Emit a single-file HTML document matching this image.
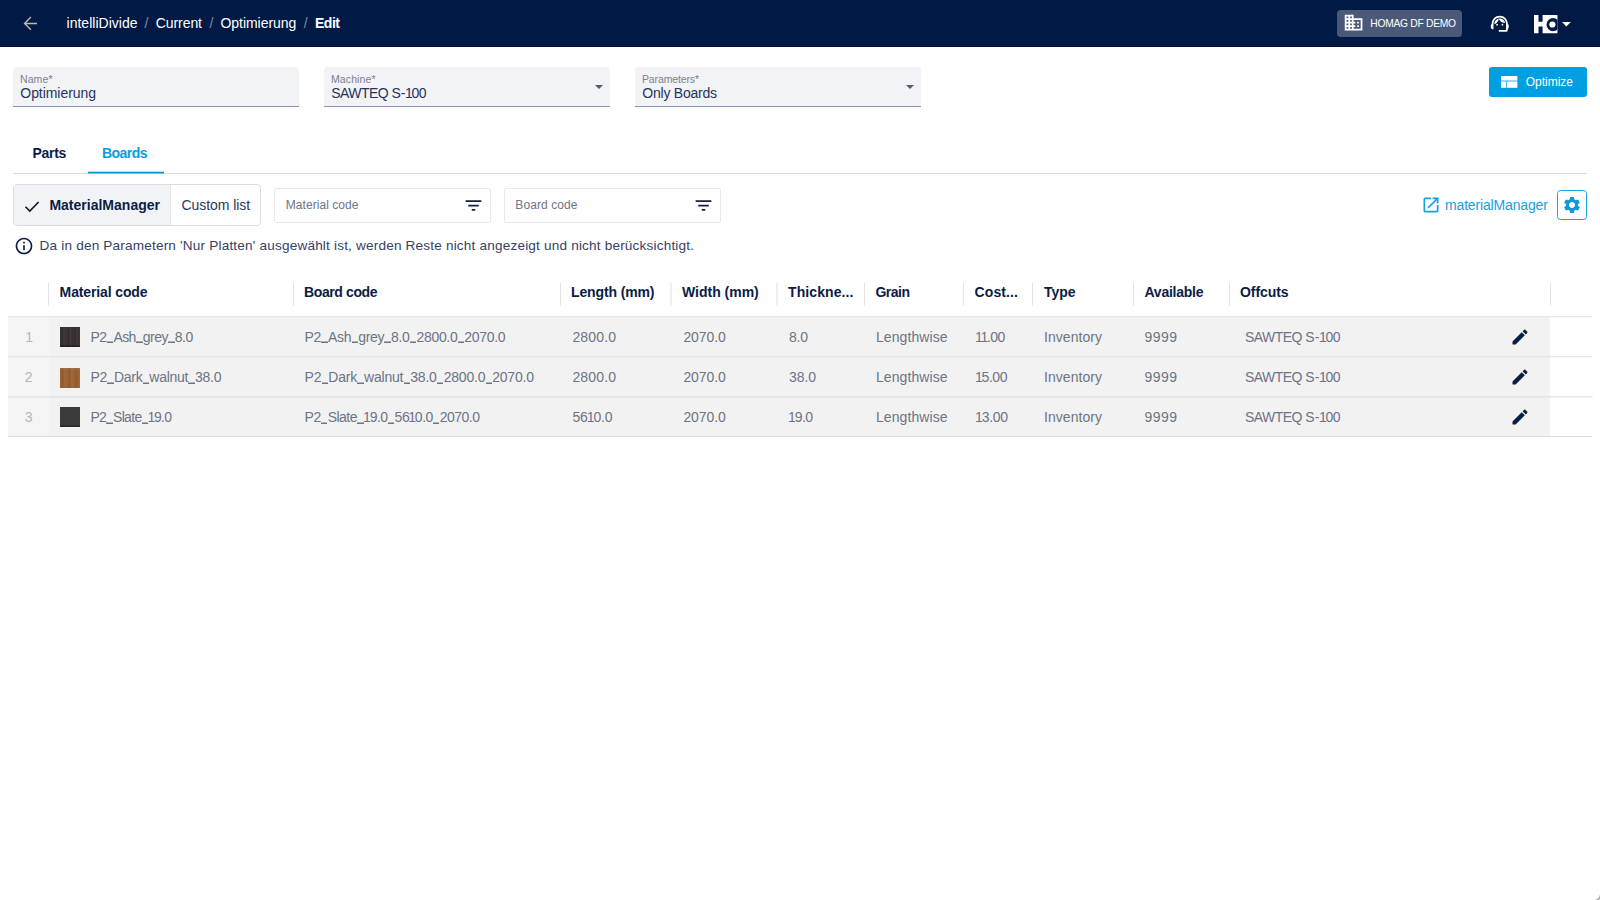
<!DOCTYPE html>
<html>
<head>
<meta charset="utf-8">
<title>intelliDivide</title>
<style>
*{box-sizing:border-box;margin:0;padding:0}
html,body{width:1600px;height:900px;overflow:hidden;background:#fff}
body{font-family:"Liberation Sans",sans-serif;color:#0b1d45;position:relative}
.t{position:absolute;white-space:pre}
.a{position:absolute}
svg{position:absolute;overflow:visible}
#hdr{position:absolute;left:0;top:0;width:1600px;height:46.5px;background:#001a45;border-bottom:1.5px solid #000b33}
.chip{left:1337px;top:10px;width:125px;height:27px;background:#4b5979;border-radius:4px}
.fld{position:absolute;top:66.5px;height:40px;width:286px;background:#f2f3f6;border-bottom:1.5px solid #8d92ae;border-radius:4px 4px 0 0}
.car{position:absolute;top:84.5px;width:0;height:0;border-left:4.2px solid transparent;border-right:4.2px solid transparent;border-top:4.4px solid #4f5875}
.btn{left:1489px;top:67px;width:98px;height:29.5px;background:#009fe3;border-radius:3px}
.tabline{left:13px;top:173px;width:1574px;height:1.2px;background:#dcdcdc}
.tabsel{left:88px;top:171.6px;width:76px;height:1.7px;background:#0a9ee2}
.tg{left:13.2px;top:184px;width:247.5px;height:41.5px;border:1px solid #dcdde2;border-radius:4px;background:#fff;overflow:hidden}
.tg i{position:absolute;left:0;top:0;width:157px;height:100%;background:#f2f3f6;border-right:1px solid #e6e7ea}
.fi{top:187.5px;height:35px;width:216.5px;border:1px solid #e8e9ec;border-radius:2px;background:#fff}
.gear{left:1556.5px;top:190px;width:30.5px;height:30px;border:1px solid #1aa3e3;border-radius:3.5px;background:#fff}
.vs{top:283px;width:1.2px;height:22.5px;background:#e3e3e3}
.row{left:8px;width:1542px;height:40px;background:#f2f2f2}
.row i{position:absolute;left:0;top:0;width:41px;height:100%;background:#f5f5f5}
.hl{left:8px;width:1584.5px;height:1.2px;background:#dedede}
.sw{left:60px;width:20px;height:19.5px}
.u{display:inline-block;width:6.3px;margin:0 .35px;color:transparent;background:linear-gradient(rgba(108,116,134,.5) 50%,#6c7486 50%) no-repeat 0 12.6px/100% 2px}
.n{margin:0 -.7px 0 -.9px}
.h{margin:0 .9px 0 .7px}
</style>
</head>
<body>
<div id="hdr"></div>
<svg style="left:0;top:0" width="60" height="46" viewBox="0 0 60 46"><path d="M37 23.4H24.9M30.9 17.1L24.6 23.4L30.9 29.700" fill="none" stroke="#bcb9ae" stroke-width="1.45"/></svg>
<div class="a chip"></div>
<svg style="left:1342.6px;top:12.35px" width="21.2" height="21.2" viewBox="0 0 24 24"><path fill="#fff" d="M12 7V3H2v18h20V7H12zM6 19H4v-2h2v2zm0-4H4v-2h2v2zm0-4H4V9h2v2zm0-4H4V5h2v2zm4 12H8v-2h2v2zm0-4H8v-2h2v2zm0-4H8V9h2v2zm0-4H8V5h2v2zm10 12h-8v-2h2v-2h-2v-2h2v-2h-2V9h8v10zm-2-8h-2v2h2v-2zm0 4h-2v2h2v-2z"/></svg>
<svg style="left:1488.900px;top:13.400px" width="21.500" height="21.500" viewBox="0 0 24 24"><g fill="#fff"><path d="M21 12.22C21 6.73 16.74 3 12 3c-4.69 0-9 3.65-9 9.28-.6.34-1 .98-1 1.72v2c0 1.1.9 2 2 2h1v-6.1c0-3.87 3.13-7 7-7s7 3.130 7 7V19h-8v2h8c1.1 0 2-.9 2-2v-1.22c.59-.31 1-.92 1-1.64v-2.3c0-.7-.41-1.310-1-1.620z"/><circle cx="9" cy="13" r="1"/><circle cx="15" cy="13" r="1"/><path d="M18 11.03C17.52 8.18 15.04 6 12.05 6c-3.03 0-6.290 2.510-6.030 6.450 2.470-1.010 4.330-3.210 4.860-5.890 1.310 2.630 4 4.440 7.120 4.470z"/></g></svg>
<!-- HC logo -->
<svg style="left:1534.250px;top:15.200px" width="23.450" height="18.200" viewBox="0 0 23.450 18.200"><defs><clipPath id="lc"><rect x="8.600" y="0" width="14.850" height="18.200"/></clipPath></defs><path d="M0 0H4.500V6.700H8.600V0H23.450V18.200H8.600V11.500H4.500V18.200H0z" fill="#fff"/><g clip-path="url(#lc)"><circle cx="19.100" cy="9.600" r="6.600" fill="#001a45"/><circle cx="18.400" cy="9.500" r="3.100" fill="#fff"/></g></svg>
<svg style="left:1562.400px;top:21.600px" width="8.800" height="4.600" viewBox="0 0 8.800 4.600"><path d="M0 0h8.800L4.400 4.600z" fill="#fff"/></svg>

<div class="fld" style="left:13px"></div>
<div class="fld" style="left:324px"></div>
<div class="fld" style="left:635px"></div>
<div class="car" style="left:594.8px"></div>
<div class="car" style="left:905.8px"></div>

<div class="a btn"></div>
<svg style="left:1501px;top:76px" width="16.4" height="11.8" viewBox="0 0 16.4 11.8"><rect x="0" y="0" width="16.4" height="4.6" fill="#fff"/><rect x="0" y="5.4" width="5.2" height="6.4" fill="#fff"/><rect x="5.9" y="5.4" width="10.5" height="6.4" fill="#fff"/></svg>

<div class="a tabline"></div>
<svg style="left:80px;top:168px" width="92" height="8" viewBox="80 168 92 8"><rect x="88" y="171.700" width="76" height="1.750" fill="#0a93de"/></svg>

<div class="a tg"><i></i></div>
<svg style="left:24px;top:200px" width="16" height="13" viewBox="0 0 16 13"><path d="M1.500 6.700L5.800 11L14.600 2" fill="none" stroke="#15171c" stroke-width="1.600"/></svg>

<div class="a fi" style="left:274px"></div>
<div class="a fi" style="left:504px"></div>
<svg style="left:463px;top:194.900px" width="21" height="21" viewBox="0 0 24 24"><path d="M10 18h4v-2h-4v2zM3 6v2h18V6H3zm3 7h12v-2H6v2z" fill="#14213f"/></svg>
<svg style="left:693px;top:194.900px" width="21" height="21" viewBox="0 0 24 24"><path d="M10 18h4v-2h-4v2zM3 6v2h18V6H3zm3 7h12v-2H6v2z" fill="#14213f"/></svg>

<svg style="left:1420.600px;top:194.900px" width="20" height="20" viewBox="0 0 24 24"><path d="M19 19H5V5h7V3H5c-1.110 0-2 .9-2 2v14c0 1.100.89 2 2 2h14c1.100 0 2-.9 2-2v-7h-2v7zM14 3v2h3.590l-9.830 9.830 1.410 1.410L19 6.410V10h2V3h-7z" fill="#14a0e2"/></svg>
<div class="a gear"></div>
<svg style="left:1561.700px;top:195px" width="20" height="20" viewBox="0 0 24 24"><path fill="#1496da" d="M19.140 12.940c.04-.3.060-.61.060-.94 0-.32-.02-.640-.070-.940l2.030-1.580c.18-.140.230-.41.120-.61l-1.920-3.320c-.12-.220-.37-.290-.59-.220l-2.390.960c-.5-.38-1.030-.7-1.620-.940l-.36-2.540c-.04-.24-.24-.41-.48-.41h-3.840c-.24 0-.43.170-.47.410l-.36 2.540c-.59.240-1.130.57-1.620.940l-2.390-.96c-.22-.08-.47 0-.59.220L2.740 8.870c-.12.210-.08.470.12.610l2.030 1.580c-.05.3-.09.630-.09.940s.02.640.07.940l-2.030 1.580c-.18.140-.23.410-.12.610l1.920 3.320c.12.220.37.290.59.220l2.390-.96c.5.380 1.030.7 1.620.940l.36 2.540c.05.240.24.410.48.410h3.840c.24 0 .44-.17.470-.41l.36-2.540c.59-.24 1.130-.56 1.620-.940l2.390.96c.22.080.47 0 .59-.22l1.920-3.320c.12-.22.070-.47-.12-.61l-2.010-1.580zM12 15.600c-1.980 0-3.600-1.620-3.600-3.600s1.620-3.600 3.600-3.600 3.600 1.620 3.600 3.600-1.620 3.600-3.600 3.600z"/></svg>

<svg style="left:13.700px;top:235.900px" width="20" height="20" viewBox="0 0 24 24"><path d="M11 7h2v2h-2zm0 4h2v6h-2zm1-9C6.480 2 2 6.480 2 12s4.480 10 10 10 10-4.480 10-10S17.520 2 12 2zm0 18c-4.410 0-8-3.590-8-8s3.590-8 8-8 8 3.590 8 8-3.590 8-8 8z" fill="#0b1d45"/></svg>

<!-- table -->

<div class="a row" style="top:317px;height:120px"><i></i></div>

<svg style="left:0;top:270px" width="1600" height="180" viewBox="0 270 1600 180"><g stroke="#e2e2e2" stroke-width="1.1"><path d="M48.5 283V305.600"/><path d="M293.5 283V305.600"/><path d="M560.5 283V305.600"/><path d="M671 283V305.600"/><path d="M777 283V305.600"/><path d="M864.5 283V305.600"/><path d="M963.5 283V305.600"/><path d="M1032.5 283V305.600"/><path d="M1133.5 283V305.600"/><path d="M1229.5 283V305.600"/><path d="M1550.5 283V305.600"/></g><g stroke="#dfdfdf" stroke-width="1.1"><path d="M8 316.7H1592.5"/><path d="M8 356.8H1592.5"/><path d="M8 396.9H1592.5"/><path d="M8 436.5H1592.5"/></g></svg>

<div class="a sw" style="top:327px;background:linear-gradient(rgba(0,0,0,0) 90%,rgba(0,0,0,.4) 94%),repeating-linear-gradient(90deg,#3c3533 0,#322c2a 2px,#3f3836 4px,#352f2d 6.500px)"></div>
<div class="a sw" style="top:368px;background:linear-gradient(rgba(255,255,255,.08) 0,rgba(0,0,0,0) 12%),repeating-linear-gradient(90deg,#9c6538 0,#925a30 2.500px,#a16a3c 5px,#975f34 7px)"></div>
<div class="a sw" style="top:407px;height:20px;background:linear-gradient(rgba(0,0,0,0) 90%,rgba(0,0,0,.35) 94%),#3b3b3c"></div>
<svg style="left:1510px;top:327px" width="20" height="20" viewBox="0 0 24 24"><path d="M3 17.250V21h3.750L17.810 9.940l-3.750-3.750L3 17.250zM20.710 7.040c.39-.39.39-1.020 0-1.410l-2.340-2.340a.9959.996 0 0 0-1.410 0l-1.830 1.830 3.750 3.750 1.830-1.830z" fill="#0b1d45"/></svg>
<svg style="left:1510px;top:367px" width="20" height="20" viewBox="0 0 24 24"><path d="M3 17.250V21h3.750L17.810 9.940l-3.750-3.750L3 17.250zM20.710 7.040c.39-.39.39-1.020 0-1.410l-2.340-2.340a.9959.996 0 0 0-1.410 0l-1.830 1.830 3.750 3.750 1.830-1.830z" fill="#0b1d45"/></svg>
<svg style="left:1510px;top:407px" width="20" height="20" viewBox="0 0 24 24"><path d="M3 17.250V21h3.750L17.810 9.940l-3.750-3.750L3 17.250zM20.710 7.040c.39-.39.39-1.020 0-1.410l-2.340-2.340a.9959.996 0 0 0-1.410 0l-1.830 1.830 3.750 3.750 1.830-1.830z" fill="#0b1d45"/></svg>

<svg style="left:1588px;top:888px" width="12" height="12" viewBox="1588 888 12 12"><path d="M1600.400 895.200A5.900 5.900 0 0 1 1595 900.400" fill="none" stroke="#a0a0a0" stroke-width="1.300"/></svg>
<div class="t" style="left:66.50px;top:14.65px;font-size:14px;line-height:17px;color:#ffffff;letter-spacing:0.016px;">intelliDivide</div>
<div class="t" style="left:144.50px;top:14.65px;font-size:14px;line-height:17px;color:#7f8aa6;">/</div>
<div class="t" style="left:155.80px;top:14.65px;font-size:14px;line-height:17px;color:#ffffff;letter-spacing:-0.082px;">Current</div>
<div class="t" style="left:209.50px;top:14.65px;font-size:14px;line-height:17px;color:#7f8aa6;">/</div>
<div class="t" style="left:220.50px;top:14.65px;font-size:14px;line-height:17px;color:#ffffff;letter-spacing:-0.046px;">Optimierung</div>
<div class="t" style="left:303.80px;top:14.65px;font-size:14px;line-height:17px;color:#7f8aa6;">/</div>
<div class="t" style="left:315.00px;top:14.65px;font-size:14px;line-height:17px;color:#ffffff;font-weight:bold;letter-spacing:-0.484px;">Edit</div>
<div class="t" style="left:1370.30px;top:17.93px;font-size:10.3px;line-height:12px;color:#ffffff;letter-spacing:-0.295px;">HOMAG DF DEMO</div>
<div class="t" style="left:1525.80px;top:75.04px;font-size:12px;line-height:14px;color:#ffffff;letter-spacing:-0.021px;">Optimize</div>
<div class="t" style="left:20.00px;top:73.26px;font-size:10.5px;line-height:13px;color:#7b808d;letter-spacing:0.097px;">Name*</div>
<div class="t" style="left:20.30px;top:84.85px;font-size:14px;line-height:17px;color:#27345b;letter-spacing:-0.056px;">Optimierung</div>
<div class="t" style="left:331.00px;top:73.26px;font-size:10.5px;line-height:13px;color:#7b808d;letter-spacing:0.103px;">Machine*</div>
<div class="t" style="left:331.30px;top:84.85px;font-size:14px;line-height:17px;color:#27345b;letter-spacing:-0.565px;">SAWTEQ S<span class="h">-</span><span class="n">1</span>00</div>
<div class="t" style="left:642.00px;top:73.26px;font-size:10.5px;line-height:13px;color:#7b808d;letter-spacing:-0.136px;">Parameters*</div>
<div class="t" style="left:642.30px;top:84.85px;font-size:14px;line-height:17px;color:#27345b;letter-spacing:-0.233px;">Only Boards</div>
<div class="t" style="left:32.50px;top:145.15px;font-size:14px;line-height:17px;color:#0b1d45;font-weight:bold;letter-spacing:-0.307px;">Parts</div>
<div class="t" style="left:102.00px;top:145.15px;font-size:14px;line-height:17px;color:#069de1;font-weight:bold;letter-spacing:-0.547px;">Boards</div>
<div class="t" style="left:49.40px;top:197.15px;font-size:14px;line-height:17px;color:#0b1d45;font-weight:bold;letter-spacing:0.008px;">MaterialManager</div>
<div class="t" style="left:181.50px;top:197.15px;font-size:14px;line-height:17px;color:#2a3860;letter-spacing:-0.064px;">Custom list</div>
<div class="t" style="left:285.80px;top:198.14px;font-size:12px;line-height:14px;color:#6d7486;letter-spacing:0.046px;">Material code</div>
<div class="t" style="left:515.30px;top:198.14px;font-size:12px;line-height:14px;color:#6d7486;letter-spacing:0.079px;">Board code</div>
<div class="t" style="left:1445.00px;top:196.55px;font-size:14px;line-height:17px;color:#169fe0;letter-spacing:-0.161px;">materialManager</div>
<div class="t" style="left:39.60px;top:238.19px;font-size:13.6px;line-height:16px;color:#364264;letter-spacing:0.176px;">Da in den Parametern 'Nur Platten' ausgewählt ist, werden Reste nicht angezeigt und nicht berücksichtigt.</div>
<div class="t" style="left:59.60px;top:283.85px;font-size:14px;line-height:17px;color:#0b1d45;font-weight:bold;letter-spacing:-0.124px;">Material code</div>
<div class="t" style="left:304.00px;top:283.85px;font-size:14px;line-height:17px;color:#0b1d45;font-weight:bold;letter-spacing:-0.391px;">Board code</div>
<div class="t" style="left:571.00px;top:283.85px;font-size:14px;line-height:17px;color:#0b1d45;font-weight:bold;letter-spacing:-0.126px;">Length (mm)</div>
<div class="t" style="left:682.00px;top:283.85px;font-size:14px;line-height:17px;color:#0b1d45;font-weight:bold;letter-spacing:-0.008px;">Width (mm)</div>
<div class="t" style="left:788.00px;top:283.85px;font-size:14px;line-height:17px;color:#0b1d45;font-weight:bold;letter-spacing:0.103px;">Thickne...</div>
<div class="t" style="left:875.50px;top:283.85px;font-size:14px;line-height:17px;color:#0b1d45;font-weight:bold;letter-spacing:-0.519px;">Grain</div>
<div class="t" style="left:974.50px;top:283.85px;font-size:14px;line-height:17px;color:#0b1d45;font-weight:bold;letter-spacing:0.119px;">Cost...</div>
<div class="t" style="left:1044.00px;top:283.85px;font-size:14px;line-height:17px;color:#0b1d45;font-weight:bold;letter-spacing:-0.047px;">Type</div>
<div class="t" style="left:1144.50px;top:283.85px;font-size:14px;line-height:17px;color:#0b1d45;font-weight:bold;letter-spacing:-0.247px;">Available</div>
<div class="t" style="left:1240.00px;top:283.85px;font-size:14px;line-height:17px;color:#0b1d45;font-weight:bold;letter-spacing:-0.084px;">Offcuts</div>
<div class="t" style="left:25.30px;top:328.85px;font-size:14px;line-height:17px;color:#b4b7be;">1</div>
<div class="t" style="left:90.40px;top:328.85px;font-size:14px;line-height:17px;color:#6c7486;letter-spacing:-0.556px;">P2<span class="u">_</span>Ash<span class="u">_</span>grey<span class="u">_</span>8.0</div>
<div class="t" style="left:304.60px;top:328.85px;font-size:14px;line-height:17px;color:#6c7486;letter-spacing:-0.333px;">P2<span class="u">_</span>Ash<span class="u">_</span>grey<span class="u">_</span>8.0<span class="u">_</span>2800.0<span class="u">_</span>2070.0</div>
<div class="t" style="left:572.40px;top:328.85px;font-size:14px;line-height:17px;color:#6c7486;letter-spacing:0.176px;">2800.0</div>
<div class="t" style="left:683.40px;top:328.85px;font-size:14px;line-height:17px;color:#6c7486;letter-spacing:-0.066px;">2070.0</div>
<div class="t" style="left:789.00px;top:328.85px;font-size:14px;line-height:17px;color:#6c7486;letter-spacing:-0.234px;">8.0</div>
<div class="t" style="left:876.00px;top:328.85px;font-size:14px;line-height:17px;color:#6c7486;letter-spacing:0.074px;">Lengthwise</div>
<div class="t" style="left:975.80px;top:328.85px;font-size:14px;line-height:17px;color:#6c7486;letter-spacing:-0.625px;"><span class="n">1</span><span class="n">1</span>.00</div>
<div class="t" style="left:1044.00px;top:328.85px;font-size:14px;line-height:17px;color:#6c7486;letter-spacing:0.052px;">Inventory</div>
<div class="t" style="left:1144.50px;top:328.85px;font-size:14px;line-height:17px;color:#6c7486;letter-spacing:0.451px;">9999</div>
<div class="t" style="left:1245.00px;top:328.85px;font-size:14px;line-height:17px;color:#6c7486;letter-spacing:-0.539px;">SAWTEQ S<span class="h">-</span><span class="n">1</span>00</div>
<div class="t" style="left:24.80px;top:368.95px;font-size:14px;line-height:17px;color:#b4b7be;">2</div>
<div class="t" style="left:90.40px;top:368.95px;font-size:14px;line-height:17px;color:#6c7486;letter-spacing:-0.285px;">P2<span class="u">_</span>Dark<span class="u">_</span>walnut<span class="u">_</span>38.0</div>
<div class="t" style="left:304.60px;top:368.95px;font-size:14px;line-height:17px;color:#6c7486;letter-spacing:-0.208px;">P2<span class="u">_</span>Dark<span class="u">_</span>walnut<span class="u">_</span>38.0<span class="u">_</span>2800.0<span class="u">_</span>2070.0</div>
<div class="t" style="left:572.40px;top:368.95px;font-size:14px;line-height:17px;color:#6c7486;letter-spacing:0.176px;">2800.0</div>
<div class="t" style="left:683.40px;top:368.95px;font-size:14px;line-height:17px;color:#6c7486;letter-spacing:-0.066px;">2070.0</div>
<div class="t" style="left:789.00px;top:368.95px;font-size:14px;line-height:17px;color:#6c7486;letter-spacing:-0.083px;">38.0</div>
<div class="t" style="left:876.00px;top:368.95px;font-size:14px;line-height:17px;color:#6c7486;letter-spacing:0.074px;">Lengthwise</div>
<div class="t" style="left:975.80px;top:368.95px;font-size:14px;line-height:17px;color:#6c7486;letter-spacing:-0.443px;"><span class="n">1</span>5.00</div>
<div class="t" style="left:1044.00px;top:368.95px;font-size:14px;line-height:17px;color:#6c7486;letter-spacing:0.052px;">Inventory</div>
<div class="t" style="left:1144.50px;top:368.95px;font-size:14px;line-height:17px;color:#6c7486;letter-spacing:0.451px;">9999</div>
<div class="t" style="left:1245.00px;top:368.95px;font-size:14px;line-height:17px;color:#6c7486;letter-spacing:-0.539px;">SAWTEQ S<span class="h">-</span><span class="n">1</span>00</div>
<div class="t" style="left:24.80px;top:409.05px;font-size:14px;line-height:17px;color:#b4b7be;">3</div>
<div class="t" style="left:90.40px;top:409.05px;font-size:14px;line-height:17px;color:#6c7486;letter-spacing:-0.710px;">P2<span class="u">_</span>Slate<span class="u">_</span><span class="n">1</span>9.0</div>
<div class="t" style="left:304.60px;top:409.05px;font-size:14px;line-height:17px;color:#6c7486;letter-spacing:-0.516px;">P2<span class="u">_</span>Slate<span class="u">_</span><span class="n">1</span>9.0<span class="u">_</span>56<span class="n">1</span>0.0<span class="u">_</span>2070.0</div>
<div class="t" style="left:572.40px;top:409.05px;font-size:14px;line-height:17px;color:#6c7486;letter-spacing:-0.213px;">56<span class="n">1</span>0.0</div>
<div class="t" style="left:683.40px;top:409.05px;font-size:14px;line-height:17px;color:#6c7486;letter-spacing:-0.066px;">2070.0</div>
<div class="t" style="left:789.00px;top:409.05px;font-size:14px;line-height:17px;color:#6c7486;letter-spacing:-0.522px;"><span class="n">1</span>9.0</div>
<div class="t" style="left:876.00px;top:409.05px;font-size:14px;line-height:17px;color:#6c7486;letter-spacing:0.074px;">Lengthwise</div>
<div class="t" style="left:975.80px;top:409.05px;font-size:14px;line-height:17px;color:#6c7486;letter-spacing:-0.290px;"><span class="n">1</span>3.00</div>
<div class="t" style="left:1044.00px;top:409.05px;font-size:14px;line-height:17px;color:#6c7486;letter-spacing:0.052px;">Inventory</div>
<div class="t" style="left:1144.50px;top:409.05px;font-size:14px;line-height:17px;color:#6c7486;letter-spacing:0.451px;">9999</div>
<div class="t" style="left:1245.00px;top:409.05px;font-size:14px;line-height:17px;color:#6c7486;letter-spacing:-0.539px;">SAWTEQ S<span class="h">-</span><span class="n">1</span>00</div>

</body>
</html>
